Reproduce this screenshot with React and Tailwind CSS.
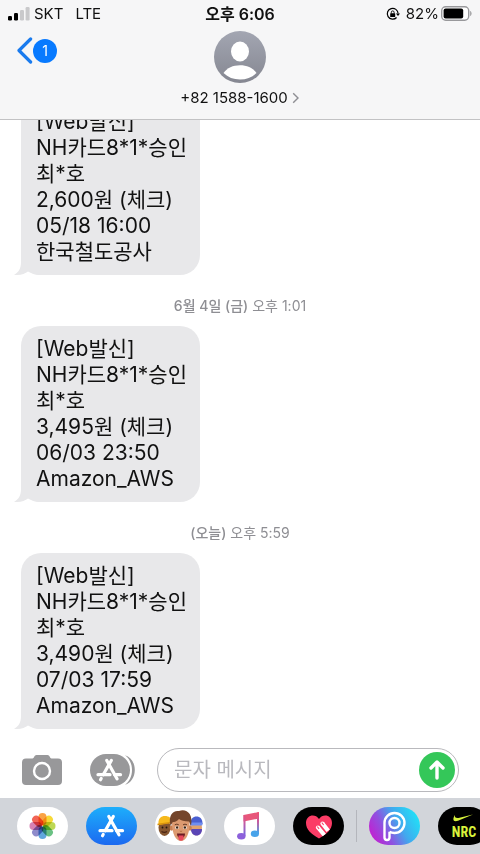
import React from "react";

const threads = [
  {
    id: "m1",
    lines: ["[Web발신]", "NH카드8*1*승인", "최*호", "2,600원 (체크)", "05/18 16:00", "한국철도공사"],
  },
  {
    id: "m2",
    day: "6월 4일 (금)",
    time: "오후 1:01",
    lines: ["[Web발신]", "NH카드8*1*승인", "최*호", "3,495원 (체크)", "06/03 23:50", "Amazon_AWS"],
  },
  {
    id: "m3",
    day: "(오늘)",
    time: "오후 5:59",
    lines: ["[Web발신]", "NH카드8*1*승인", "최*호", "3,490원 (체크)", "07/03 17:59", "Amazon_AWS"],
  },
];

function StatusBar() {
  return (
    <div className="grid h-[27px] grid-cols-[1fr_auto_1fr] items-center px-2 text-[15px] leading-5 text-[#111]">
      <div className="flex items-center">
        <svg className="h-[14px] w-[22px]" viewBox="0 0 22 14" aria-hidden="true">
          <rect x="0" y="9" width="4" height="4.5" rx="1.2" fill="#000" />
          <rect x="6" y="6" width="4" height="7.5" rx="1.2" fill="#000" />
          <rect x="12" y="3" width="4" height="10.5" rx="1.2" fill="#c9c9cb" />
          <rect x="17.6" y="0" width="4" height="13.5" rx="1.2" fill="#c9c9cb" />
        </svg>
        <span className="ml-1">SKT</span>
        <span className="ml-3">LTE</span>
      </div>
      <div className="text-base font-semibold leading-5">오후 6:06</div>
      <div className="flex items-center justify-end">
        <svg className="h-[14px] w-[14px]" viewBox="0 0 14 14" aria-hidden="true">
          <path d="M10.6 10.500A5.400 5.400 0 1 1 12.100 6.600" fill="none" stroke="#000" strokeWidth="1.200" />
          <path d="M9.900 6.400H14L12 9.100z" fill="#000" />
          <rect x="4.200" y="6.200" width="5" height="3.700" rx=".5" fill="#000" />
          <path d="M5.300 6.500V5.300a1.400 1.400 0 0 1 2.800 0v1.200" fill="none" stroke="#000" strokeWidth=".9" />
        </svg>
        <span className="ml-1.5">82%</span>
        <svg className="ml-0.5 h-[15px] w-[31px]" viewBox="0 0 31 15" aria-hidden="true">
          <rect x=".7" y=".7" width="27" height="13.6" rx="4" fill="#fff" stroke="#98989b" strokeWidth="1.4" />
          <rect x="2.6" y="2.6" width="19.6" height="9.8" rx="2" fill="#000" />
          <path d="M29.2 5v5c1.8-.6 1.8-4.4 0-5z" fill="#98989b" />
        </svg>
      </div>
    </div>
  );
}

function Header() {
  return (
    <header className="shrink-0 border-b border-[#c2c2c4] bg-[#f6f6f7]">
      <StatusBar />
      <div className="grid grid-cols-[1fr_auto_1fr] pb-[11px] pt-1">
        <button type="button" aria-label="뒤로, 읽지 않은 메시지 1개" className="mt-1.5 flex items-center self-start justify-self-start pl-4">
          <svg className="h-[27px] w-[17px]" viewBox="0 0 17 27" fill="none" aria-hidden="true">
            <path d="M14.6 2 3 13.5 14.6 25" stroke="#1a7bee" strokeWidth="3.2" strokeLinecap="round" strokeLinejoin="round" />
          </svg>
          <span className="flex size-6 items-center justify-center rounded-full bg-[#087aff] text-sm text-white">1</span>
        </button>
        <button type="button" className="flex flex-col items-center text-[#111]">
          <svg className="size-[52px]" viewBox="0 0 52 52" aria-hidden="true">
            <defs>
              <linearGradient id="avatar" x1="0" y1="0" x2="0" y2="1">
                <stop offset="0" stopColor="#a3a6b2" />
                <stop offset="1" stopColor="#858791" />
              </linearGradient>
            </defs>
            <circle cx="26" cy="26" r="26" fill="url(#avatar)" />
            <ellipse cx="26" cy="20.5" rx="9" ry="10" fill="#fff" />
            <path d="M9.5 42C13 37 19 34.3 26 34.3S39 37 42.500 42C38 46.400 32.500 48.500 26 48.500S14 46.400 9.500 42z" fill="#fff" />
          </svg>
          <span className="mt-[5px] flex items-center text-[15px] leading-5">
            +82 1588-1600
            <svg className="ml-1 h-3 w-2" viewBox="0 0 8 12" fill="none" aria-hidden="true">
              <path d="M1.200 1.200 6 6 1.200 10.800" stroke="#8e8e93" strokeWidth="1.400" />
            </svg>
          </span>
        </button>
      </div>
    </header>
  );
}

function Message({ lines }) {
  return (
    <div className="relative ml-[21px] w-[179px] shrink-0 self-start rounded-[20px] bg-[#e8e8ea] py-2.5 pl-[15px] text-[21px] leading-[26px] text-[#111]">
      <svg className="absolute bottom-0 -left-[7px] h-6 w-[26px]" viewBox="0 0 26 24" aria-hidden="true">
        <path d="M7 0V11C7 17 5 21 0 24C6 24.300 11 23 14 20.500C18 23 22 24 26 24V0Z" fill="#e8e8ea" />
      </svg>
      <div className="relative">
        {lines.map((line) => (
          <p key={line} className="whitespace-nowrap">{line}</p>
        ))}
      </div>
    </div>
  );
}

function StoreGlyph() {
  return (
    <g fill="none" stroke="#fff" strokeWidth="3.200" strokeLinecap="round">
      <path d="M15.300 1.500 7.200 15.700" />
      <path d="M10.800 1.500 21 19.800" />
      <path d="M2 15.700H14" />
      <path d="M18.600 15.700H24.500" />
      <path d="M5.200 19.500 4.500 20.700" />
    </g>
  );
}

function Composer() {
  return (
    <form className="flex shrink-0 items-center pb-1.5 pl-[22px] pr-[21px] pt-2" onSubmit={(e) => e.preventDefault()}>
      <button type="button" aria-label="카메라">
        <svg className="h-8 w-10" viewBox="0 0 40 32" aria-hidden="true">
          <path d="M4 4.500H10.500C12 4.500 12.300 1 14.500 1H25.500C27.700 1 28 4.500 29.500 4.500H36A4 4 0 0 1 40 8.500V27A4 4 0 0 1 36 31H4A4 4 0 0 1 0 27V8.500A4 4 0 0 1 4 4.500Z" fill="#98989a" />
          <circle cx="20" cy="17" r="8" fill="none" stroke="#fff" strokeWidth="2.400" />
        </svg>
      </button>
      <button type="button" aria-label="앱" className="ml-7">
        <svg className="h-8 w-[45px]" viewBox="0 0 45 32" aria-hidden="true">
          <rect x="0" y="0" width="40" height="32" rx="16" fill="#98989a" />
          <path d="M35 1.200C41 3 44.800 9 44.800 16S41 29 35 30.800C39.500 27.500 42 22 42 16S39.500 4.500 35 1.200Z" fill="#98989a" />
          <g transform="translate(6 5)"><StoreGlyph /></g>
        </svg>
      </button>
      <div className="ml-[22px] flex h-11 min-w-0 flex-1 items-center rounded-full border border-[#b9b9bd] bg-white pl-4 pr-[3px]">
        <input
          type="text"
          aria-label="문자 메시지"
          placeholder="문자 메시지"
          className="h-8 min-w-0 flex-1 bg-transparent text-xl outline-none placeholder:text-[#b9b9be]"
        />
        <button type="submit" aria-label="보내기" className="flex size-9 shrink-0 items-center justify-center rounded-full bg-[#34c759]">
          <svg className="size-6" viewBox="0 0 24 24" fill="none" stroke="#fff" strokeWidth="3.400" strokeLinecap="round" strokeLinejoin="round" aria-hidden="true">
            <path d="M12 20V4.500M6 10 12 4 18 10" />
          </svg>
        </button>
      </div>
    </form>
  );
}

const petals = ["#f9962b", "#f6d41c", "#b5d33c", "#55b872", "#4a9bd8", "#7f7cc4", "#d070a8", "#f0503f"];

function PhotosIcon() {
  return (
    <g>
      <rect width="51" height="38" fill="#fff" />
      {petals.map((color, i) => (
        <rect key={color} x="21.500" y="6" width="8" height="12.500" rx="4" fill={color} fillOpacity=".88" transform={`rotate(${i * 45} 25.500 19)`} className="mix-blend-multiply" />
      ))}
    </g>
  );
}

function StoreIcon() {
  return (
    <g>
      <defs>
        <linearGradient id="store" x1="0" y1="0" x2="0" y2="1">
          <stop offset="0" stopColor="#1daefb" />
          <stop offset="1" stopColor="#1c69f0" />
        </linearGradient>
      </defs>
      <rect width="51" height="38" fill="url(#store)" />
      <g transform="translate(12 8)"><StoreGlyph /></g>
    </g>
  );
}

function MemojiIcon() {
  return (
    <g>
      <rect width="51" height="38" fill="#fff" />
      <ellipse cx="9.500" cy="20.500" rx="6" ry="8.500" fill="#84552f" />
      <path d="M3.500 17C3 11.500 6 9 10 9S16.500 11 17 15.500L3.500 18Z" fill="#f6b91c" />
      <path d="M2.500 17.500 16 15.500" stroke="#d8930d" strokeWidth="1.400" />
      <circle cx="7.500" cy="20.500" r=".9" fill="#22150c" />
      <circle cx="11.500" cy="20.500" r=".9" fill="#22150c" />
      <path d="M6.500 24.500q3 1.800 5.500 0" fill="none" stroke="#4a2413" strokeWidth="1.200" />
      <ellipse cx="41.500" cy="20.500" rx="5.500" ry="8" fill="#e0a26f" />
      <path d="M35.500 17C35.500 11.500 38 9.500 41.500 9.500S47.500 11.500 47.500 17Z" fill="#4a5fd0" />
      <rect x="35" y="15.500" width="12.500" height="3" rx="1" fill="#6f8df0" />
      <path d="M36 22H47C47 26 45 28.500 41.500 28.500S36 26 36 22Z" fill="#5a45b5" />
      <ellipse cx="16.500" cy="21" rx="1.800" ry="2.800" fill="#c97f52" />
      <ellipse cx="35" cy="21" rx="1.800" ry="2.800" fill="#c97f52" />
      <path d="M17 16C17 9 20 7 26 7S34.500 10 34.500 17C34.500 27 31 34 26 34S17 27 17 16Z" fill="#dd9a70" />
      <path d="M15.500 19C13 8 18 3 24 4C31 1.500 38.500 6 36 19L34 14.500C29 14.500 26 13.500 24 12C22 14.500 19.500 15 17.800 15Z" fill="#74452b" />
      <path d="M19.800 17.800q2-1.300 4 0M28 17.800q2-1.300 4 0" fill="none" stroke="#5b3320" strokeWidth=".9" />
      <ellipse cx="22" cy="20.500" rx="1.800" ry="1.500" fill="#fff" />
      <ellipse cx="30" cy="20.500" rx="1.800" ry="1.500" fill="#fff" />
      <circle cx="22.100" cy="20.500" r="1.200" fill="#3b2314" />
      <circle cx="29.900" cy="20.500" r="1.200" fill="#3b2314" />
      <path d="M24.800 24q1.200 1 2.400 0" fill="none" stroke="#b36a42" strokeWidth=".9" />
      <path d="M22 26.500H30C30 29.500 28.500 31 26 31S22 29.500 22 26.500Z" fill="#6c1b22" />
      <path d="M23.500 28.500H28.500V31.500C28.500 34.500 23.500 34.500 23.500 31.500Z" fill="#e8485c" />
    </g>
  );
}

function MusicIcon() {
  return (
    <g>
      <defs>
        <linearGradient id="music" gradientUnits="userSpaceOnUse" x1="0" y1="5" x2="0" y2="31">
          <stop offset="0" stopColor="#f0506e" />
          <stop offset=".4" stopColor="#c95b9f" />
          <stop offset=".8" stopColor="#8065d8" />
        </linearGradient>
        <linearGradient id="musicRight" gradientUnits="userSpaceOnUse" x1="0" y1="5" x2="0" y2="29">
          <stop offset="0" stopColor="#f0506e" />
          <stop offset=".4" stopColor="#c95b9f" />
          <stop offset=".9" stopColor="#48a3ea" />
        </linearGradient>
      </defs>
      <rect width="51" height="38" fill="#fff" />
      <path d="M19.500 8 35 5V11.500L19.500 14.500Z" fill="#e8577a" />
      <path d="M19.500 8H21.500V29H19.500Z" fill="url(#music)" />
      <path d="M33 5.500H35V27H33Z" fill="url(#musicRight)" />
      <ellipse cx="17.300" cy="29.200" rx="4.200" ry="3.300" fill="#8c61db" />
      <ellipse cx="30.900" cy="26.700" rx="4.100" ry="3.300" fill="#48a3ea" />
    </g>
  );
}

function HeartIcon() {
  return (
    <g>
      <rect width="51" height="38" fill="#000" />
      <path d="M26 31.500C18 27 13 22.500 13 16C13 8 22 6 26 12C30 6 39 8 39 16C39 22.500 34 27 26 31.500Z" fill="#fb3c66" />
      <g stroke="#fff" strokeWidth="4.200">
        <path d="M25 20.500 31.300 28M29.500 16.500 35.200 23.800" />
      </g>
      <circle cx="25" cy="20.500" r="2.100" fill="#fff" />
      <circle cx="29.500" cy="16.500" r="2.100" fill="#fff" />
      <path d="M24.600 20l1.200 1.500M29.100 16l1.200 1.500" stroke="#fb3c66" strokeWidth="1.200" strokeLinecap="round" />
    </g>
  );
}

function PicsArtIcon() {
  return (
    <g>
      <defs>
        <linearGradient id="pics" x1="0" y1=".7" x2="1" y2=".3">
          <stop offset="0" stopColor="#c31fd0" />
          <stop offset=".3" stopColor="#9050e0" />
          <stop offset=".6" stopColor="#42a8ee" />
          <stop offset="1" stopColor="#20e2f7" />
        </linearGradient>
      </defs>
      <rect width="51" height="38" fill="url(#pics)" />
      <g fill="none" stroke="#fff" strokeWidth="2.400">
        <circle cx="25.500" cy="16" r="5" />
        <path d="M20.500 24.800V30.500A2.500 2.500 0 0 1 15.500 30.500V16A10 10 0 1 1 25.500 26C22.500 26 20.500 24.800 20.500 24.800" />
      </g>
    </g>
  );
}

function RunClubIcon() {
  return (
    <g>
      <rect width="51" height="38" fill="#000" />
      <path d="M17 8C14.500 11.500 14.500 15.500 20 13.800L35 7.500 21.500 10.800C18 11.600 16.300 10.500 17 8Z" fill="#d8f23c" />
      <text x="26" y="30" textAnchor="middle" className="fill-[#d8f23c] font-['Liberation_Sans_Narrow','Roboto_Condensed',Roboto,sans-serif] text-[14px] font-bold">NRC</text>
    </g>
  );
}

function AppPill({ label, children }) {
  return (
    <button type="button" aria-label={label} className="h-[38px] w-[51px] shrink-0 overflow-hidden rounded-full">
      <svg className="h-[38px] w-[51px]" viewBox="0 0 51 38" aria-hidden="true">{children}</svg>
    </button>
  );
}

function AppStrip() {
  return (
    <nav aria-label="iMessage 앱" className="flex h-14 shrink-0 items-center gap-[18px] overflow-hidden bg-[#d2d5da] pl-[17px]">
      <AppPill label="사진"><PhotosIcon /></AppPill>
      <AppPill label="App Store"><StoreIcon /></AppPill>
      <AppPill label="미모티콘"><MemojiIcon /></AppPill>
      <AppPill label="음악"><MusicIcon /></AppPill>
      <AppPill label="Digital Touch"><HeartIcon /></AppPill>
      <div className="-mx-1.5 h-8 w-px shrink-0 bg-[#b4b6bc]" />
      <AppPill label="PicsArt"><PicsArtIcon /></AppPill>
      <AppPill label="Nike Run Club"><RunClubIcon /></AppPill>
    </nav>
  );
}

export default function App() {
  return (
    <div className="flex h-dvh flex-col overflow-hidden bg-white font-['Inter','Noto_Sans_CJK_KR',sans-serif]">
      <Header />
      <main className="flex min-h-0 flex-1 flex-col justify-end overflow-hidden pb-[11px]">
        {threads.map((item) => (
          <React.Fragment key={item.id}>
            {item.day && (
              <div className="mb-2.5 mt-[21px] shrink-0 text-center text-sm leading-5 text-[#8e8e93]">
                <span className="font-medium">{item.day}</span> {item.time}
              </div>
            )}
            <Message lines={item.lines} />
          </React.Fragment>
        ))}
      </main>
      <Composer />
      <AppStrip />
    </div>
  );
}
